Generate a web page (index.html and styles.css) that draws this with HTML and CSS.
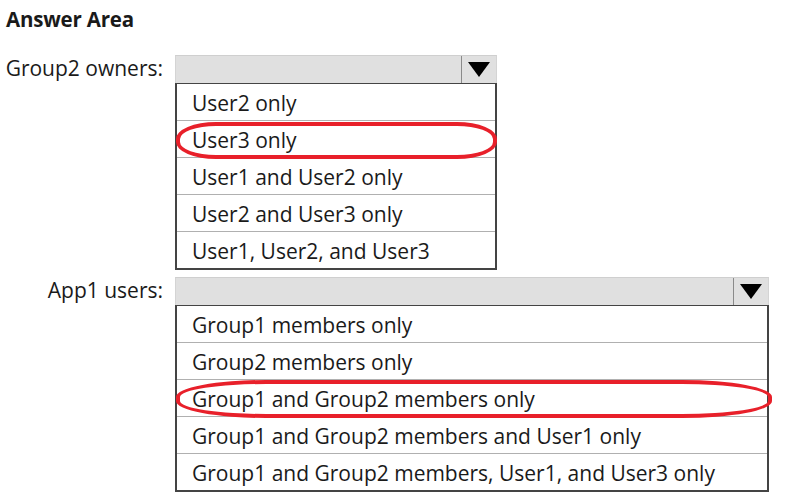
FILE: index.html
```html
<!DOCTYPE html>
<html>
<head>
<meta charset="utf-8">
<link rel="stylesheet" href="styles.css">
</head>
<body>
<div class="page">
  <h1 class="title">Answer Area</h1>
  <div class="question q1">
    <div class="label">Group2 owners:</div>
    <div class="dropdown narrow">
      <div class="head"><div class="field"></div><div class="arrow"><svg width="22" height="16" viewBox="0 0 22 16"><polygon points="0,0 22,0 11,15" fill="#000"/></svg></div></div>
      <ul class="list">
        <li class="item">User2 only</li>
        <li class="item selected">User3 only<span class="circle c1"></span></li>
        <li class="item">User1 and User2 only</li>
        <li class="item">User2 and User3 only</li>
        <li class="item">User1, User2, and User3</li>
      </ul>
    </div>
  </div>
  <div class="question q2">
    <div class="label">App1 users:</div>
    <div class="dropdown wide">
      <div class="head"><div class="field"></div><div class="arrow"><svg width="22" height="16" viewBox="0 0 22 16"><polygon points="0,0 22,0 11,15" fill="#000"/></svg></div></div>
      <ul class="list">
        <li class="item">Group1 members only</li>
        <li class="item">Group2 members only</li>
        <li class="item selected">Group1 and Group2 members only<span class="circle c2"></span></li>
        <li class="item">Group1 and Group2 members and User1 only</li>
        <li class="item">Group1 and Group2 members, User1, and User3 only</li>
      </ul>
    </div>
  </div>
</div>
</body>
</html>
```
FILE: styles.css
```css
html, body {
  margin: 0;
  padding: 0;
  background: #fff;
}
.page {
  font-family: "Open Sans", "Noto Sans", sans-serif;
  color: #1a1a1a;
  padding-top: 5px;
}
.title {
  margin: 0 0 0 6px;
  font-size: 20.5px;
  font-weight: 700;
  line-height: 28px;
  letter-spacing: -0.2px;
}
.question {
  display: grid;
  grid-template-columns: 175px auto;
  align-items: start;
}
.q1 { margin-top: 22px; }
.q2 { margin-top: 7px; }
.label {
  text-align: right;
  padding-right: 12px;
  font-size: 21px;
  line-height: 27px;
  white-space: nowrap;
}
.dropdown.narrow { width: 322px; }
.dropdown.wide { width: 594px; }
.head {
  display: flex;
  height: 28px;
  box-sizing: border-box;
  background: #e0e0e0;
  border-top: 1px solid #cfcfcf;
  border-left: 1px solid #d4d4d4;
  border-right: 1px solid #d4d4d4;
}
.field { flex: 1; }
.arrow {
  width: 34px;
  border-left: 1px solid #8a8a8a;
  display: flex;
  align-items: center;
  justify-content: center;
}
.list {
  list-style: none;
  margin: 0;
  padding: 0;
  border: 2px solid #444;
  border-top-width: 1px;
  background: #fff;
}
.item {
  position: relative;
  height: 37px;
  box-sizing: border-box;
  line-height: 39px;
  padding-left: 15px;
  font-size: 21px;
  border-bottom: 1px solid #b0b0b0;
  white-space: nowrap;
}
.item:last-child {
  border-bottom: none;
  height: 36px;
}
.circle {
  position: absolute;
  border: 4px solid #e8202a;
  pointer-events: none;
}
.c1 {
  left: -1px;
  right: -2px;
  top: 1px;
  bottom: -2px;
  border-radius: 40px / 17px;
}
.c2 {
  left: -1px;
  right: -5px;
  top: 0px;
  bottom: -2px;
  border-radius: 90px / 17px;
}
```
